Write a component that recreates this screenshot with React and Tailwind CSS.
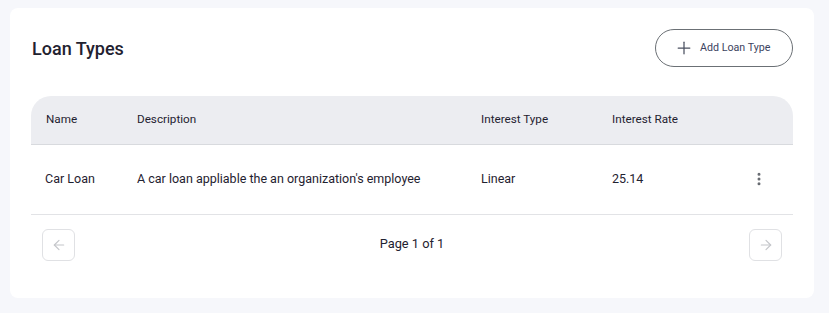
import { Plus, ArrowLeft, ArrowRight, MoreVertical } from 'lucide-react';

const ROWS = [
    { name: 'Car Loan', description: "A car loan appliable the an organization's employee", type: 'Linear', rate: '25.14' },
];

export default function App() {
    return (
        <div className="min-h-screen bg-[#f6f7fb] pl-[10px] pr-[15px] pt-2 pb-4 font-['Roboto',sans-serif]">
            <div className="bg-white rounded-lg px-[21px] pt-[21px] pb-[37px]">
                {/* Header */}
                <div className="flex items-center justify-between">
                    <h1 className="text-[18px] font-medium text-[#1f2230] pl-px">Loan Types</h1>
                    <button className="flex items-center gap-[6px] h-[38px] w-[138px] pl-[18px] rounded-full border border-[#6b7075] text-[10.7px] text-[#3c4360]">
                        <Plus className="w-5 h-5 text-[#4b5060]" strokeWidth={1.5} />
                        Add Loan Type
                    </button>
                </div>

                {/* Table */}
                <table className="w-full mt-[29px] border-collapse text-[11.7px] text-[#1f2230]">
                    <thead>
                        <tr className="bg-[#ecedf1] h-[48px] text-left">
                            <th className="font-normal pl-[15px] w-[106px] rounded-tl-[20px] border-b border-[#d8dade]">Name</th>
                            <th className="font-normal w-[344px] border-b border-[#d8dade]">Description</th>
                            <th className="font-normal w-[131px] border-b border-[#d8dade]">Interest Type</th>
                            <th className="font-normal border-b border-[#d8dade]">Interest Rate</th>
                            <th className="w-[60px] rounded-tr-[20px] border-b border-[#d8dade]"></th>
                        </tr>
                    </thead>
                    <tbody className="text-[12.5px]">
                        {ROWS.map((r) => (
                            <tr key={r.name} className="h-[70px] border-b border-[#e2e3e6]">
                                <td className="pl-[14px]">{r.name}</td>
                                <td>{r.description}</td>
                                <td>{r.type}</td>
                                <td>{r.rate}</td>
                                <td>
                                    <MoreVertical className="w-4 h-4 text-[#666a70] ml-[18px]" strokeWidth={2.5} />
                                </td>
                            </tr>
                        ))}
                    </tbody>
                </table>

                {/* Pagination */}
                <div className="flex items-center justify-between mt-[14px] px-[11px]">
                    <button className="w-[33px] h-[32px] rounded-md border border-[#e0e1e4] flex items-center justify-center">
                        <ArrowLeft className="w-4 h-4 text-[#c4c6ca]" strokeWidth={1.75} />
                    </button>
                    <span className="text-[12.8px] text-[#1f2230] -mt-[2px]">Page 1 of 1</span>
                    <button className="w-[33px] h-[32px] rounded-md border border-[#e0e1e4] flex items-center justify-center">
                        <ArrowRight className="w-4 h-4 text-[#c4c6ca]" strokeWidth={1.75} />
                    </button>
                </div>
            </div>
        </div>
    );
}
